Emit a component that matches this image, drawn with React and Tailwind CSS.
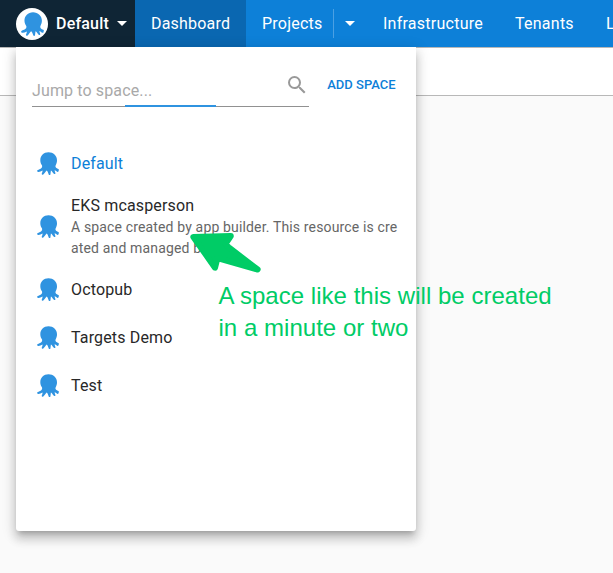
import React from "react";

function Octopus({ className }) {
  return (
    <svg viewBox="0 0 22 23" className={className} fill="#2f93e0" aria-hidden="true">
      <path d="M11.500.2C6.700.2 3.300 3.700 3.300 8.200c0 2.300.8 3.700 1.600 5 .6 1.100.2 2.300-.9 3.200C2.800 17.400 1.100 17.600.4 18.300c-.6.700-.1 1.600.8 1.600 1.400.1 2.800-.4 4.300-1.300.2 1-.3 2.100-.7 3-.4 1 .7 1.600 1.500.9 1.300-1.100 2.200-3 3.300-4 .9.300 1.600 2.400 2.100 3.900.3.800 1.500.8 1.700 0 .3-1.300.2-2.700.5-3.900 1.100.5 1.900 2.200 3 3.300.7.700 1.700.1 1.500-.8-.2-.9-.8-1.800-.8-2.800 1.100.3 1.900 1.400 3 1.700.8.200 1.300-.7.900-1.300.6-.3.600-1.100-.1-1.500-1-.6-1.900-.8-2.500-1.600-.7-.9-.5-1.600-.1-2.600.7-1.400 1.200-2.700 1.200-4.700C20 3.700 16.300.2 11.500.2Z" />
    </svg>
  );
}

function Caret() {
  return (
    <svg viewBox="0 0 10 5" className="h-[5px] w-[10px] shrink-0" fill="#fff" aria-hidden="true">
      <path d="M0 0h10L5 5Z" />
    </svg>
  );
}

function Space({ name, description, active }) {
  return (
    <li className={`flex items-center pl-[21px] ${description ? "h-[78px]" : "h-12"}`}>
      <Octopus className="mr-3 h-[23px] w-[22px] shrink-0" />
      <div className="w-[334px] pt-[2px] tracking-[0.15px]">
        <div className={`text-base leading-[22px] ${active ? "text-[#0d80d8]" : "text-[#282828]"}`}>{name}</div>
        {description && (
          <div className="text-sm leading-[21px] whitespace-nowrap text-[#666]">
            {description.map((line) => (
              <div key={line}>{line}</div>
            ))}
          </div>
        )}
      </div>
    </li>
  );
}

function SpaceMenu() {
  return (
    <section className="absolute top-[47px] left-4 h-[484px] w-[400px] rounded-b-[3px] bg-white shadow-[0_5px_5px_-3px_rgba(0,0,0,0.2),0_8px_10px_1px_rgba(0,0,0,0.14),0_3px_14px_2px_rgba(0,0,0,0.12)]">
      <div className="flex pt-6 pl-4">
        <div className="w-[277px]">
          <div className="flex h-[34px] items-start justify-between">
            <span className="pt-2 text-base leading-6 tracking-[0.13px] text-[#a9a9a9]">Jump to space...</span>
            <svg viewBox="0 0 24 24" className="mt-[2px] h-6 w-6" fill="#999" aria-hidden="true">
              <path d="M15.500 14h-.79l-.28-.27A6.471 6.471 0 0 0 16 9.500 6.500 6.500 0 1 0 9.500 16c1.610 0 3.090-.59 4.230-1.570l.27.28v.79l5 4.990L20.490 19l-4.990-5zm-6 0C7.010 14 5 11.990 5 9.500S7.010 5 9.500 5 14 7.010 14 9.500 11.990 14 9.500 14z" />
            </svg>
          </div>
          <div className="flex h-[2px] items-end">
            <div className="h-px w-[93px] bg-[#919191]" />
            <div className="h-[2px] w-[91px] bg-[#2f93e0]" />
            <div className="h-px grow bg-[#919191]" />
          </div>
        </div>
        <button className="ml-[18.250px] h-7 text-[13px] leading-7 font-medium text-[#0d80d8]">ADD SPACE</button>
      </div>
      <ul className="mt-8">
        <Space name="Default" active />
        <Space
          name="EKS mcasperson"
          description={["A space created by app builder. This resource is cre", "ated and managed b"]}
        />
        <Space name="Octopub" />
        <Space name="Targets Demo" />
        <Space name="Test" />
      </ul>
    </section>
  );
}

export default function App() {
  return (
    <div className="relative h-[573px] w-[613px] overflow-hidden bg-[#fafafa] font-['Roboto',sans-serif]">
      <nav className="flex h-[47px] items-center overflow-hidden bg-[#0d80d8] text-base whitespace-nowrap text-white">
        <div className="flex h-full w-[135px] shrink-0 items-center bg-[#0f2535] pl-4">
          <div className="mr-2 flex h-8 w-8 items-center justify-center rounded-full bg-white">
            <Octopus className="h-6 w-[23px]" />
          </div>
          <span className="mr-2 font-medium tracking-[0.2px]">Default</span>
          <Caret />
        </div>
        <div className="flex h-full w-[111px] shrink-0 items-center bg-[#0a67b1] pl-4 tracking-[0.2px]">Dashboard</div>
        <div className="flex h-full w-[121px] shrink-0 items-center pl-4">
          <span className="w-[71px] tracking-[0.22px]">Projects</span>
          <span className="mr-[11px] h-[29px] w-px bg-[#4ba0e3]" />
          <Caret />
        </div>
        <span className="w-[132px] shrink-0 pl-4 tracking-[0.25px]">Infrastructure</span>
        <span className="w-[91px] shrink-0 pl-4 tracking-[0.25px]">Tenants</span>
        <span className="shrink-0 pl-4">L</span>
      </nav>
      <div className="h-[49px] border-y border-[#b8b8b8] bg-white" />
      <SpaceMenu />
      <svg viewBox="0 0 72 42" className="absolute top-[232px] left-[190px] h-[42px] w-[72px]" aria-hidden="true">
        <path
          d="M3.400 5 40.800 4.100 35.400 12 38.500 15.200 67.600 37.500 27.500 26 25 35.700Z"
          fill="#00cc66"
          stroke="#00cc66"
          strokeWidth="6"
          strokeLinejoin="round"
        />
      </svg>
      <div className="absolute top-[280px] left-[218.500px] font-['Liberation_Sans',sans-serif] text-2xl leading-8 tracking-[0.03px] whitespace-nowrap text-[#00cc66]">
        <div>A space like this will be created</div>
        <div>in a minute or two</div>
      </div>
    </div>
  );
}
